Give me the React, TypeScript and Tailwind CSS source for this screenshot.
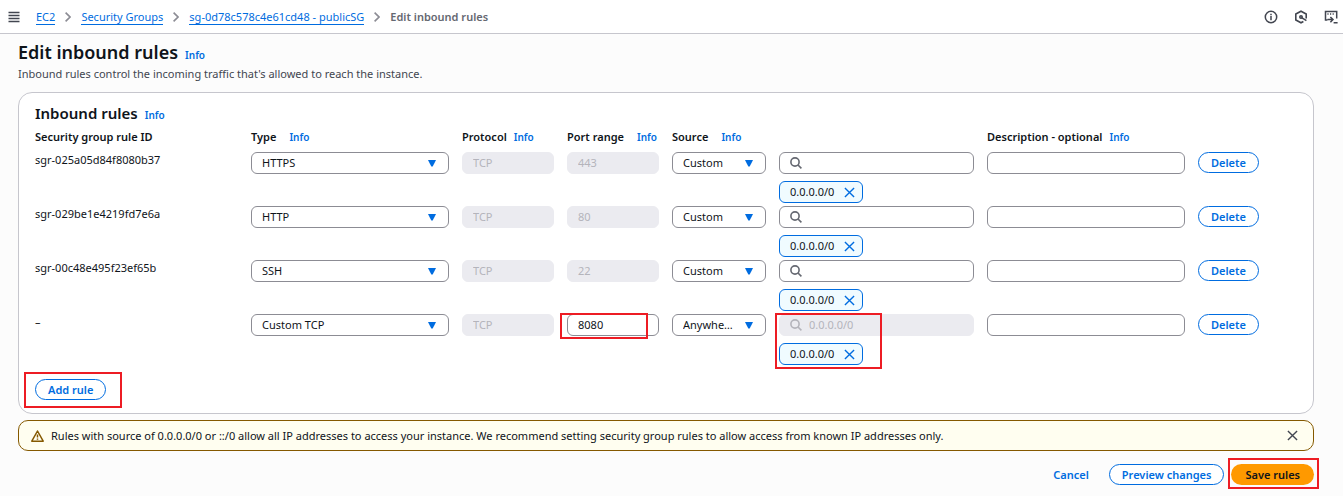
import { useState, type ReactNode } from "react";

type Rule = { id: string; type: string; port: string; source: string; custom: boolean };

const rules: Rule[] = [
  { id: "sgr-025a05d84f8080b37", type: "HTTPS", port: "443", source: "Custom", custom: false },
  { id: "sgr-029be1e4219fd7e6a", type: "HTTP", port: "80", source: "Custom", custom: false },
  { id: "sgr-00c48e495f23ef65b", type: "SSH", port: "22", source: "Custom", custom: false },
  { id: "–", type: "Custom TCP", port: "8080", source: "Anywhe…", custom: true },
];

const rowGrid =
  "grid grid-cols-[minmax(0,203fr)_minmax(0,198fr)_minmax(0,92fr)_minmax(0,92fr)_minmax(0,94fr)_minmax(0,195fr)_minmax(0,198fr)_minmax(0,99fr)] gap-x-[13px]";
const fieldBase =
  "block h-[22px] w-full min-w-0 rounded-md border border-[#8c8c94] bg-white px-[10px] text-[11px] text-[#0f141a] outline-none";
const inputField = `${fieldBase} pb-[2px] disabled:border-[#ebebf0] disabled:bg-[#ebebf0] disabled:text-[#b4b4bb]`;
const outlineButton =
  "h-[21px] rounded-full border border-[#006ce0] bg-white px-3 text-[11px] font-semibold leading-[18px] text-[#006ce0]";

function Info() {
  return (
    <a href="#info" className="text-[10px] font-semibold text-[#006ce0]">
      Info
    </a>
  );
}

function Cross({ className }: { className: string }) {
  return (
    <svg viewBox="0 0 12 12" className={className} fill="none" stroke="currentColor" strokeWidth="1.5" aria-hidden="true">
      <path d="M1 1l10 10M11 1L1 11" />
    </svg>
  );
}

function Select({ label, value }: { label: string; value: string }) {
  return (
    <div className="relative">
      <select aria-label={label} defaultValue={value} className={`${fieldBase} appearance-none`}>
        <option>{value}</option>
      </select>
      <svg viewBox="0 0 8 7" className="pointer-events-none absolute right-[13px] top-2 h-[7px] w-2 fill-[#006ce0]" aria-hidden="true">
        <path d="M0 0h8L4.7 6.5h-1.4z" />
      </svg>
    </div>
  );
}

function SearchBox({ disabled }: { disabled: boolean }) {
  return (
    <div className="relative">
      <input
        aria-label="Source search"
        disabled={disabled}
        defaultValue={disabled ? "0.0.0.0/0" : ""}
        className={`${inputField} pl-[29px]`}
      />
      <svg
        viewBox="0 0 12 12"
        className={`pointer-events-none absolute left-[11px] top-[5px] size-3 ${disabled ? "text-[#b4b4bb]" : "text-[#656871]"}`}
        fill="none"
        stroke="currentColor"
        strokeWidth="1.6"
        aria-hidden="true"
      >
        <circle cx="5" cy="5" r="4.1" />
        <path d="M8 8l3.4 3.4" />
      </svg>
    </div>
  );
}

function Highlight({ className }: { className: string }) {
  return <span className={`pointer-events-none absolute z-10 border-2 border-[#ed1c24] ${className}`} />;
}

function Crumb({ children }: { children: ReactNode }) {
  return (
    <li className="flex items-center gap-[10px]">
      <a href="#crumb" className="border-b border-[#006ce0] leading-[15px] text-[#006ce0]">
        {children}
      </a>
      <svg viewBox="0 0 6 10" className="h-[10px] w-[6px]" fill="none" stroke="#8c8c94" strokeWidth="1.6" aria-hidden="true">
        <path d="M0.6 0.6L5 5L0.6 9.4" />
      </svg>
    </li>
  );
}

function ColumnHead({ children, wide, info = true }: { children: ReactNode; wide?: boolean; info?: boolean }) {
  return (
    <th scope="col" className={`flex items-center whitespace-nowrap text-left font-semibold ${wide ? "gap-[13px]" : "gap-[7px]"}`}>
      {children}
      {info && <Info />}
    </th>
  );
}

export default function App() {
  const [warning, setWarning] = useState(true);
  return (
    <div className="min-h-screen bg-[#fcfcfc] font-['Noto_Sans',sans-serif] text-[11px] leading-4 text-[#0f141a]">
      <header className="flex h-[34px] items-center justify-between border-b border-[#c6c6cd] bg-white pl-2 pr-[5px]">
        <div className="flex items-center gap-4">
          <button aria-label="Open navigation" className="text-[#424650]">
            <svg viewBox="0 0 12 12" className="size-3" stroke="currentColor" strokeWidth="1.5" aria-hidden="true">
              <path d="M0.5 1.5h11M0.5 4.5h11M0.5 7.5h11M0.5 10.5h11" />
            </svg>
          </button>
          <nav aria-label="Breadcrumb">
            <ol className="flex items-center gap-[10px]">
              <Crumb>EC2</Crumb>
              <Crumb>Security Groups</Crumb>
              <Crumb>sg-0d78c578c4e61cd48 - publicSG</Crumb>
              <li className="font-semibold text-[#656871]">Edit inbound rules</li>
            </ol>
          </nav>
        </div>
        <div className="flex items-center gap-4 text-[#424650]">
          <button aria-label="Help">
            <svg viewBox="0 0 14 14" className="size-[14px]" fill="none" stroke="currentColor" strokeWidth="1.5" aria-hidden="true">
              <circle cx="7" cy="7" r="5.7" />
              <path d="M7 6v4.2M7 3.8v1.4" />
            </svg>
          </button>
          <button aria-label="Settings">
            <svg viewBox="0 0 14 14" className="size-[14px]" fill="none" stroke="currentColor" strokeWidth="1.6" aria-hidden="true">
              <path d="M12.2 8.6V4L7 1.2L1.8 4v6L7 12.8l2.4-1.3" />
              <circle cx="7" cy="7" r="1.2" />
              <path d="M7.6 7.6l4.8 3" />
            </svg>
          </button>
          <button aria-label="CloudShell">
            <svg viewBox="0 0 14 14" className="size-[14px]" fill="none" stroke="currentColor" strokeWidth="1.5" aria-hidden="true">
              <path d="M3.4 10H1.5V1.5h11.2V8.5M3.4 4h1.2M6 4h1.2M8.6 4h1.2M3.5 9.6h5.4M6.4 7l2.6 2.6l-2.6 2.7M9.6 12.8h4" />
            </svg>
          </button>
        </div>
      </header>

      <main className="pl-[18px] pr-[29px] pt-[6px]">
        <div className="flex items-baseline gap-[7px]">
          <h1 className="text-[18px] font-semibold leading-6">Edit inbound rules</h1>
          <Info />
        </div>
        <p className="mt-[2px] text-[#424650]">Inbound rules control the incoming traffic that's allowed to reach the instance.</p>

        <section className="mt-[10px] rounded-[14px] border border-[#c6c6cd] bg-white px-4 pb-[13px] pt-[10px]">
          <div className="flex items-baseline gap-[7px]">
            <h2 className="text-[15px] font-semibold leading-5">Inbound rules</h2>
            <Info />
          </div>
          <table className="mt-[6px] block">
            <thead className="block">
              <tr className={`${rowGrid} h-[23px] items-start`}>
                <ColumnHead info={false}>Security group rule ID</ColumnHead>
                <ColumnHead wide>Type</ColumnHead>
                <ColumnHead>Protocol</ColumnHead>
                <ColumnHead wide>Port range</ColumnHead>
                <ColumnHead wide>Source</ColumnHead>
                <td />
                <ColumnHead>Description - optional</ColumnHead>
                <td />
              </tr>
            </thead>
            <tbody className="block">
              {rules.map((rule) => (
                <tr key={rule.id} className={`${rowGrid} pb-[3px]`}>
                  <td>{rule.id}</td>
                  <td>
                    <Select label="Type" value={rule.type} />
                  </td>
                  <td>
                    <input aria-label="Protocol" disabled defaultValue="TCP" className={inputField} />
                  </td>
                  <td className="relative">
                    <input aria-label="Port range" disabled={!rule.custom} defaultValue={rule.port} className={inputField} />
                    {rule.custom && <Highlight className="-left-[7px] -top-px h-[26px] w-[88px]" />}
                  </td>
                  <td>
                    <Select label="Source" value={rule.source} />
                  </td>
                  <td className="relative flex flex-col gap-[7px]">
                    <SearchBox disabled={rule.custom} />
                    <span className="flex h-[22px] items-center gap-[10px] self-start rounded-md border border-[#006ce0] bg-[#f0fbff] pl-[10px] pr-[7px]">
                      0.0.0.0/0
                      <button aria-label="Remove 0.0.0.0/0" className="text-[#006ce0]">
                        <Cross className="size-[11px]" />
                      </button>
                    </span>
                    {rule.custom && <Highlight className="-left-1 -top-px h-14 w-[107px]" />}
                  </td>
                  <td>
                    <input aria-label="Description" className={inputField} />
                  </td>
                  <td>
                    <button className={outlineButton}>Delete</button>
                  </td>
                </tr>
              ))}
            </tbody>
          </table>
          <div className="relative mt-[11px] flex w-fit">
            <button className={outlineButton}>Add rule</button>
            <Highlight className="-left-[11px] -top-[7px] h-9 w-[98px]" />
          </div>
        </section>

        {warning && (
          <div role="alert" className="mt-[6px] flex min-h-[31px] items-center gap-[7px] rounded-[10px] border border-[#855900] bg-[#fffef0] pl-3 pr-[15px]">
            <svg viewBox="0 0 13 12" className="h-3 w-[13px] shrink-0" fill="none" stroke="#855900" strokeWidth="1.5" strokeLinejoin="round" aria-hidden="true">
              <path d="M6.5 1L12.2 11.2H0.8zM6.5 4.4v3M6.5 8.4v1.4" />
            </svg>
            <p className="flex-1">
              Rules with source of 0.0.0.0/0 or ::/0 allow all IP addresses to access your instance. We recommend setting security group rules to allow access from known IP addresses only.
            </p>
            <button aria-label="Dismiss" className="text-[#424650]" onClick={() => setWarning(false)}>
              <Cross className="size-[11px]" />
            </button>
          </div>
        )}

        <div className="mt-[13px] flex items-center justify-end gap-[7px]">
          <button className="px-[13px] text-[11px] font-semibold text-[#006ce0]">Cancel</button>
          <button className={outlineButton}>Preview changes</button>
          <div className="relative flex">
            <button className="h-[21px] rounded-full bg-[#ff9900] px-[14px] text-[11px] font-semibold">Save rules</button>
            <Highlight className="-bottom-1 -left-[3px] -right-[5px] -top-[6px]" />
          </div>
        </div>
      </main>
    </div>
  );
}
